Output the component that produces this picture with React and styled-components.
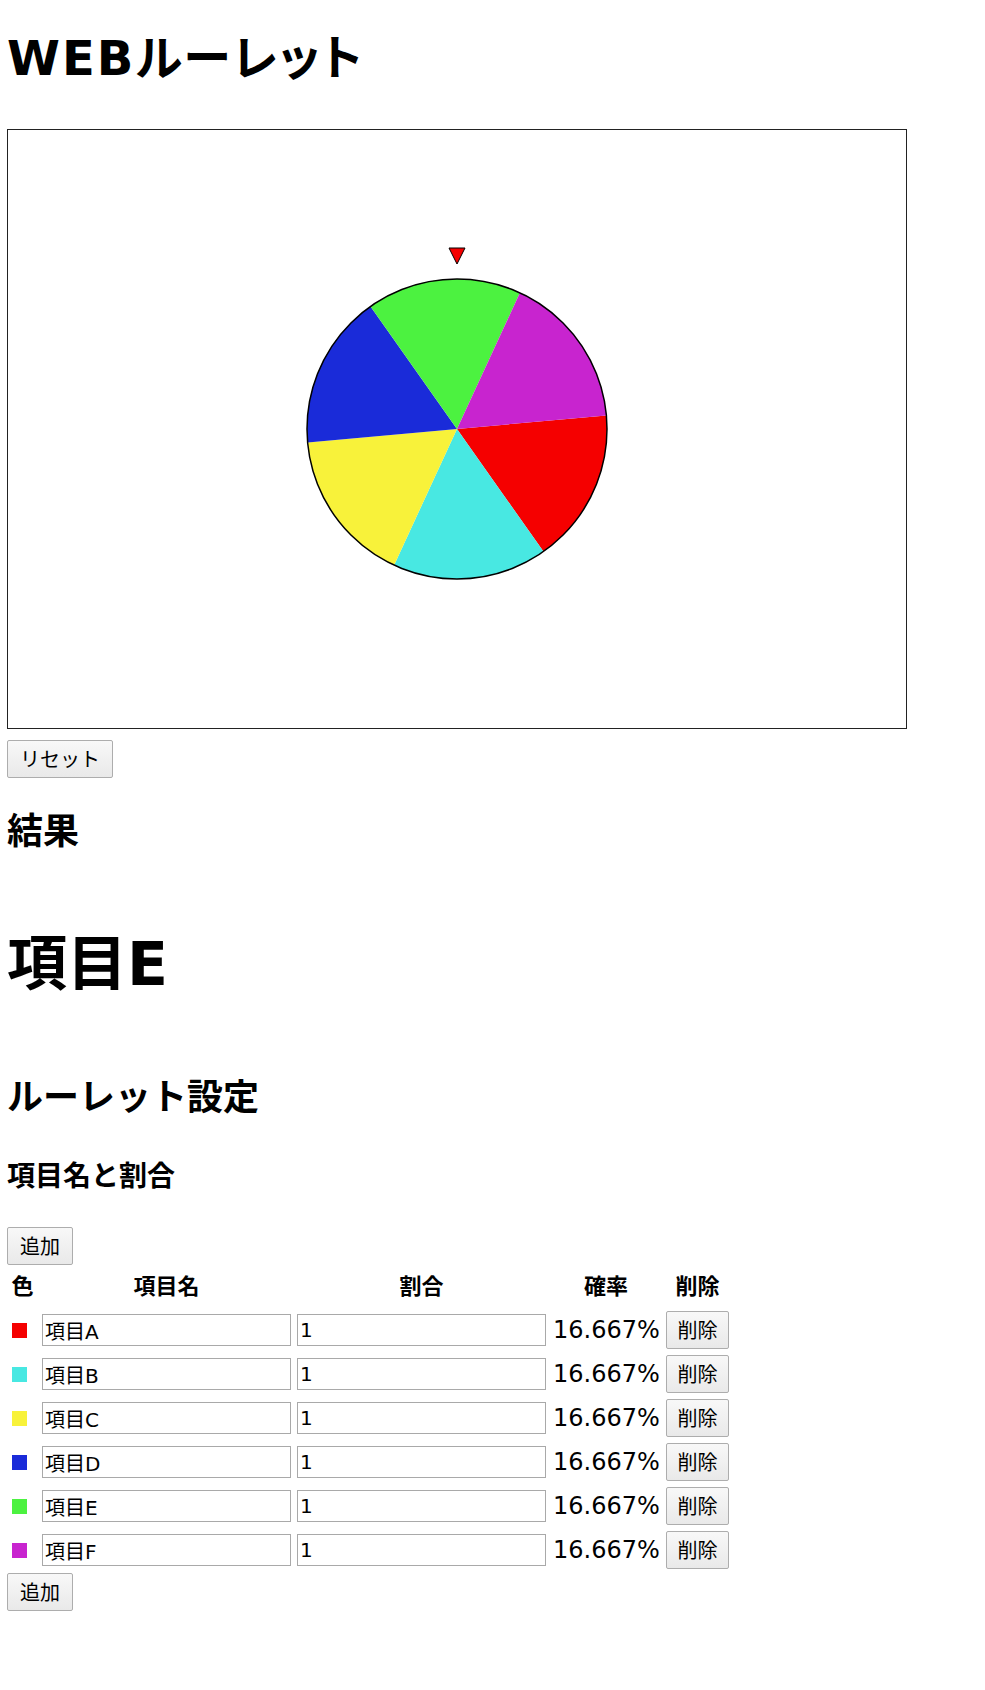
import React, { useState } from "react";
import styled, { createGlobalStyle } from "styled-components";

const GlobalStyle = createGlobalStyle`
  body {
    margin: 0;
    background: #fff;
    color: #000;
    font-family: "DejaVu Sans", "Noto Sans CJK JP", sans-serif;
  }
`;

const Page = styled.div`
  padding: 0 7px 60px;
`;

const Title = styled.h1`
  margin: 29px 0 42px;
  font-size: 48px;
  line-height: 58px;
  font-weight: bold;
  letter-spacing: 2px;
  font-feature-settings: "palt";
`;

const Stage = styled.div`
  box-sizing: border-box;
  width: 900px;
  height: 600px;
  border: 1px solid #222;
  svg {
    display: block;
  }
`;

const Button = styled.button`
  display: block;
  box-sizing: border-box;
  height: 38px;
  padding: 0 ${(p) => (p.$pad !== undefined ? p.$pad : 12)}px;
  margin-top: ${(p) => p.$top || 0}px;
  font-family: "Noto Sans CJK JP", sans-serif;
  font-size: 20px;
  line-height: 1;
  white-space: nowrap;
  color: #000;
  border: 1px solid #adadad;
  border-radius: 2px;
  background: linear-gradient(#f8f8f8, #e9e9e9);
`;

const Heading = styled.h2`
  margin: ${(p) => p.$top}px 0 0;
  font-size: ${(p) => p.$size}px;
  line-height: ${(p) => p.$lh}px;
  font-weight: bold;
`;

const Grid = styled.div`
  display: grid;
  grid-template-columns: 27px 249px 249px 108px 63px;
  grid-template-rows: 36px;
  grid-auto-rows: 38px;
  column-gap: 6px;
  row-gap: 6px;
  margin: 4px 0 0 2px;
  align-items: center;
`;

const HeadCell = styled.div`
  padding-bottom: 6px;
  text-align: center;
  font-family: "Noto Sans CJK JP", sans-serif;
  font-size: 22px;
  font-weight: bold;
`;

const Swatch = styled.span`
  display: block;
  width: 15px;
  height: 15px;
  margin-left: 3px;
  background: ${(p) => p.$color};
`;

const Field = styled.input`
  box-sizing: border-box;
  width: 249px;
  height: 32px;
  padding: 0 2px;
  border: 1px solid #a9a9a9;
  font-family: "DejaVu Sans", "Noto Sans CJK JP", sans-serif;
  font-size: 20px;
  color: #000;
  background: #fff;
  outline: none;
`;

const Percent = styled.div`
  font-size: 24px;
  padding-left: 1px;
`;

const items = [
  { name: "項目A", color: "#f50000" },
  { name: "項目B", color: "#48e8e2" },
  { name: "項目C", color: "#f8f23a" },
  { name: "項目D", color: "#1a2bd9" },
  { name: "項目E", color: "#4cf240" },
  { name: "項目F", color: "#c824cf" },
];

function Wheel({ list }) {
  const cx = 449;
  const cy = 299;
  const r = 150;
  const offset = 84.8;
  const step = 360 / list.length;
  const pt = (deg) => {
    const a = (deg * Math.PI) / 180;
    return [cx + r * Math.sin(a), cy - r * Math.cos(a)];
  };
  return (
    <svg width="898" height="598" viewBox="0 0 898 598">
      {list.map((it, i) => {
        const [x1, y1] = pt(offset + step * i);
        const [x2, y2] = pt(offset + step * (i + 1));
        return (
          <path
            key={it.name}
            d={`M${cx},${cy} L${x1},${y1} A${r},${r} 0 0 1 ${x2},${y2} Z`}
            fill={it.color}
          />
        );
      })}
      <circle cx={cx} cy={cy} r={r} fill="none" stroke="#000" strokeWidth="1.5" />
      <polygon points="441,118 457,118 449,134" fill="#f50000" stroke="#000" strokeWidth="1" />
    </svg>
  );
}

export default function App() {
  const [list] = useState(items);
  const pct = (100 / list.length).toFixed(3) + "%";

  return (
    <Page>
      <GlobalStyle />
      <Title>WEBルーレット</Title>
      <Stage>
        <Wheel list={list} />
      </Stage>
      <Button $top={11}>リセット</Button>

      <Heading $top={32} $size={36} $lh={44}>結果</Heading>
      <Heading $top={74} $size={60} $lh={72}>項目E</Heading>

      <Heading $top={76} $size={36} $lh={44}>ルーレット設定</Heading>
      <Heading as="h3" $top={40} $size={28} $lh={34}>項目名と割合</Heading>

      <Button $top={33}>追加</Button>
      <Grid>
        <HeadCell>色</HeadCell>
        <HeadCell>項目名</HeadCell>
        <HeadCell>割合</HeadCell>
        <HeadCell>確率</HeadCell>
        <HeadCell>削除</HeadCell>
        {list.map((it) => (
          <React.Fragment key={it.name}>
            <Swatch $color={it.color} />
            <Field defaultValue={it.name} />
            <Field defaultValue="1" />
            <Percent>{pct}</Percent>
            <Button $pad={10}>削除</Button>
          </React.Fragment>
        ))}
      </Grid>
      <Button $top={4}>追加</Button>
    </Page>
  );
}
